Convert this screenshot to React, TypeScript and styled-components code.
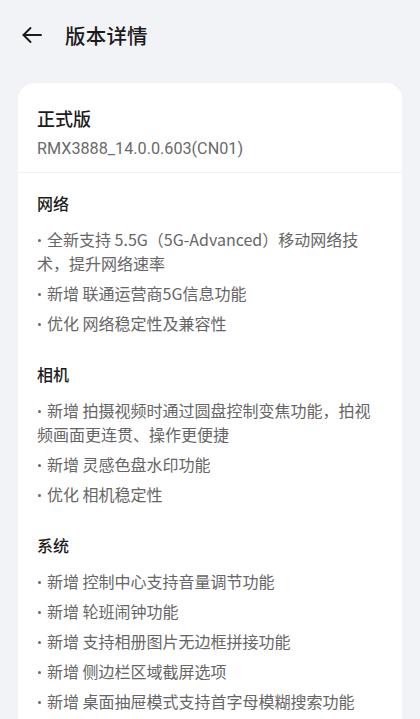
import React from "react";
import styled, { createGlobalStyle } from "styled-components";

const Global = createGlobalStyle`
  html, body { margin: 0; padding: 0; background: #f1f3f6; }
  body { font-family: "Noto Sans CJK SC", "Noto Sans", sans-serif; -webkit-font-smoothing: antialiased; }
`;

const Page = styled.div`
  width: 420px;
  height: 719px;
  overflow: hidden;
  background: #f1f3f6;
  display: flex;
  flex-direction: column;
`;

const TopBar = styled.div`
  height: 70px;
  display: flex;
  align-items: center;
  padding: 0 0 0 21px;
  box-sizing: border-box;
  gap: 22px;
`;

const BackButton = styled.button`
  border: 0;
  background: none;
  padding: 0;
  width: 22px;
  height: 22px;
  display: flex;
  align-items: center;
  justify-content: center;
  color: #1b1b1b;
`;

const Title = styled.h1`
  margin: 0;
  font-size: 20.5px;
  font-weight: 500;
  color: #1b1b1b;
  letter-spacing: 0.2px;
`;

const Card = styled.div`
  margin: 13px 18px 0 18px;
  background: #ffffff;
  border-radius: 16px 16px 0 0;
  flex: 1;
  display: flex;
  flex-direction: column;
`;

const Header = styled.div`
  padding: 22px 19px 12px;
  border-bottom: 1px solid #eef0f3;
`;

const ReleaseName = styled.div`
  font-size: 18px;
  font-weight: 500;
  color: #1c1c1c;
  line-height: 26px;
`;

const BuildNo = styled.div`
  margin-top: 7px;
  font-family: "Roboto", "Noto Sans", sans-serif;
  font-size: 16.2px;
  color: #6a6a6a;
  line-height: 22px;
`;

const Body = styled.div`
  padding: 18px 19px 0;
  display: flex;
  flex-direction: column;
  gap: 27px;
`;

const Section = styled.section`
  display: flex;
  flex-direction: column;
`;

const SectionTitle = styled.h2`
  margin: 0 0 12px;
  font-size: 16px;
  font-weight: 500;
  color: #1c1c1c;
  line-height: 24px;
`;

const List = styled.ul`
  margin: 0;
  padding: 0;
  list-style: none;
  display: flex;
  flex-direction: column;
  gap: 6px;
`;

const Item = styled.li`
  font-size: 16px;
  line-height: 24px;
  color: #666666;
  line-break: strict;
`;

const Dot = styled.span`
  display: inline-block;
  width: 3px;
  height: 3px;
  border-radius: 50%;
  background: #6a6a6a;
  margin: 0 6px 0 1px;
  vertical-align: middle;
  position: relative;
  top: -1px;
`;

const sections = [
  {
    title: "网络",
    items: [
      "全新支持 5.5G（5G-Advanced）移动网络技术，提升网络速率",
      "新增 联通运营商5G信息功能",
      "优化 网络稳定性及兼容性",
    ],
  },
  {
    title: "相机",
    items: [
      "新增 拍摄视频时通过圆盘控制变焦功能，拍视频画面更连贯、操作更便捷",
      "新增 灵感色盘水印功能",
      "优化 相机稳定性",
    ],
  },
  {
    title: "系统",
    items: [
      "新增 控制中心支持音量调节功能",
      "新增 轮班闹钟功能",
      "新增 支持相册图片无边框拼接功能",
      "新增 侧边栏区域截屏选项",
      "新增 桌面抽屉模式支持首字母模糊搜索功能",
    ],
  },
];

export default function App() {
  return (
    <Page>
      <Global />
      <TopBar>
        <BackButton aria-label="返回">
          <svg width="22" height="22" viewBox="0 0 22 22" fill="none" stroke="currentColor" strokeWidth="1.9" strokeLinecap="round" strokeLinejoin="round">
            <path d="M20 11H2.5" />
            <path d="M9.5 4L2.5 11l7 7" />
          </svg>
        </BackButton>
        <Title>版本详情</Title>
      </TopBar>
      <Card>
        <Header>
          <ReleaseName>正式版</ReleaseName>
          <BuildNo>RMX3888_14.0.0.603(CN01)</BuildNo>
        </Header>
        <Body>
          {sections.map((s) => (
            <Section key={s.title}>
              <SectionTitle>{s.title}</SectionTitle>
              <List>
                {s.items.map((it) => (
                  <Item key={it}>
                    <Dot />
                    {it}
                  </Item>
                ))}
              </List>
            </Section>
          ))}
        </Body>
      </Card>
    </Page>
  );
}
